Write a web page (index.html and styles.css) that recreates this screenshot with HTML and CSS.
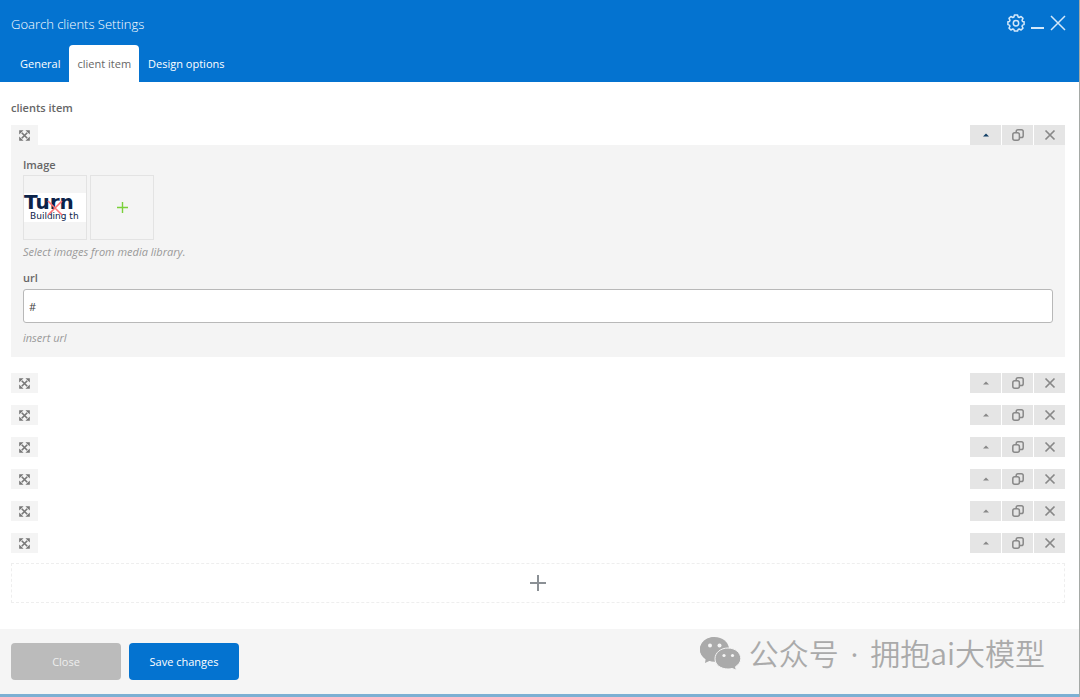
FILE: index.html
```html
<!DOCTYPE html>
<html lang="en">
<head>
<meta charset="utf-8">
<title>Goarch clients Settings</title>
<link rel="stylesheet" href="styles.css">
</head>
<body>
<svg class="sprite" aria-hidden="true">
  <symbol id="move" viewBox="0 0 12 12"><path d="M3 3l6 6M9 3L3 9" stroke="currentColor" stroke-width="1.8"/><path d="M.2.2h4.800L.2 5zM11.800.2V5L7 .2zM.2 11.800V7L5 11.800zM11.800 11.800H7L11.800 7z" fill="currentColor"/></symbol>
  <symbol id="up" viewBox="0 0 6 4"><path d="M0 3.500L3 .5l3 3z" fill="currentColor"/></symbol>
  <symbol id="copy" viewBox="0 0 12 12"><g fill="none" stroke="currentColor" stroke-width="1.500"><rect x=".8" y="3.800" width="6.600" height="7.400" rx="2"/><path d="M4.200 3.500V2.600Q4.200.8 6 .8h3.400q1.800 0 1.800 1.800v4.200q0 1.800-1.800 1.800H7.800"/></g></symbol>
  <symbol id="cross" viewBox="0 0 12 12"><path d="M1.500 1.500l9 9M10.500 1.500l-9 9" stroke="currentColor" stroke-width="1.700"/></symbol>
</svg>
<div class="window">
  <header class="header">
    <div class="titlebar">
      <h1 class="title">Goarch clients Settings</h1>
      <div class="window-controls">
        <button class="icon-button" aria-label="Settings"><svg width="18" height="18" viewBox="0 0 18 18" fill="none" stroke="currentColor" stroke-width="1.500" stroke-linejoin="round"><path d="M7.400 1h3.200l.5 2 1.100.5 1.900-1 1.900 1.900-1 1.900.5 1.100 1.600.4v2.800l-1.600.5-.5 1.100 1 1.900-1.900 1.900-1.900-1-1.100.5-.5 1.600H7.400l-.5-1.600-1.100-.5-1.900 1L2 14.100l1-1.900-.5-1.100-1.600-.5V7.800l1.600-.4L3 6.300 2 4.400l1.900-1.900 1.900 1L6.900 3z"/><circle cx="9" cy="9.200" r="2.700"/></svg></button>
        <button class="icon-button" aria-label="Minimize"><svg width="13" height="18" viewBox="0 0 13 18"><path d="M0 14h13" stroke="currentColor" stroke-width="2"/></svg></button>
        <button class="icon-button" aria-label="Close window"><svg width="16" height="18" viewBox="0 0 16 18"><path d="M1 2l14 14M15 2L1 16" stroke="currentColor" stroke-width="1.500"/></svg></button>
      </div>
    </div>
    <nav class="tabs">
      <button class="tab">General</button>
      <button class="tab tab-active">client item</button>
      <button class="tab">Design options</button>
    </nav>
  </header>
  <main class="content">
    <h2 class="label">clients item</h2>
    <div class="items">
      <section class="item item-open">
        <div class="bar">
          <button class="move" aria-label="Move"><svg><use href="#move"/></svg></button>
          <div class="actions"><button class="action action-current" aria-label="Toggle"><svg class="up"><use href="#up"/></svg></button><button class="action" aria-label="Duplicate"><svg><use href="#copy"/></svg></button><button class="action" aria-label="Delete"><svg><use href="#cross"/></svg></button></div>
        </div>
        <div class="panel">
          <h3 class="label">Image</h3>
          <div class="thumbs">
            <div class="thumb">
              <div class="logo"><span class="logo-name">Turn</span><span class="logo-line">Building th</span></div>
              <button class="remove" aria-label="Remove image"><svg width="16" height="16" viewBox="0 0 16 16"><path d="M1 1l14 14M15 1L1 15" stroke="currentColor" stroke-width="1.600"/></svg></button>
            </div>
            <button class="thumb add-image" aria-label="Add image"><svg width="11" height="11" viewBox="0 0 11 11"><path d="M0 5.500h11M5.500 0v11" stroke="currentColor" stroke-width="1.400"/></svg></button>
          </div>
          <p class="hint">Select images from media library.</p>
          <label class="label" for="url">url</label>
          <input class="field" id="url" type="text" value="#">
          <p class="hint">insert url</p>
        </div>
      </section>
      <section class="item bar">
        <button class="move" aria-label="Move"><svg><use href="#move"/></svg></button>
        <div class="actions"><button class="action" aria-label="Toggle"><svg class="up"><use href="#up"/></svg></button><button class="action" aria-label="Duplicate"><svg><use href="#copy"/></svg></button><button class="action" aria-label="Delete"><svg><use href="#cross"/></svg></button></div>
      </section>
      <section class="item bar">
        <button class="move" aria-label="Move"><svg><use href="#move"/></svg></button>
        <div class="actions"><button class="action" aria-label="Toggle"><svg class="up"><use href="#up"/></svg></button><button class="action" aria-label="Duplicate"><svg><use href="#copy"/></svg></button><button class="action" aria-label="Delete"><svg><use href="#cross"/></svg></button></div>
      </section>
      <section class="item bar">
        <button class="move" aria-label="Move"><svg><use href="#move"/></svg></button>
        <div class="actions"><button class="action" aria-label="Toggle"><svg class="up"><use href="#up"/></svg></button><button class="action" aria-label="Duplicate"><svg><use href="#copy"/></svg></button><button class="action" aria-label="Delete"><svg><use href="#cross"/></svg></button></div>
      </section>
      <section class="item bar">
        <button class="move" aria-label="Move"><svg><use href="#move"/></svg></button>
        <div class="actions"><button class="action" aria-label="Toggle"><svg class="up"><use href="#up"/></svg></button><button class="action" aria-label="Duplicate"><svg><use href="#copy"/></svg></button><button class="action" aria-label="Delete"><svg><use href="#cross"/></svg></button></div>
      </section>
      <section class="item bar">
        <button class="move" aria-label="Move"><svg><use href="#move"/></svg></button>
        <div class="actions"><button class="action" aria-label="Toggle"><svg class="up"><use href="#up"/></svg></button><button class="action" aria-label="Duplicate"><svg><use href="#copy"/></svg></button><button class="action" aria-label="Delete"><svg><use href="#cross"/></svg></button></div>
      </section>
      <section class="item bar">
        <button class="move" aria-label="Move"><svg><use href="#move"/></svg></button>
        <div class="actions"><button class="action" aria-label="Toggle"><svg class="up"><use href="#up"/></svg></button><button class="action" aria-label="Duplicate"><svg><use href="#copy"/></svg></button><button class="action" aria-label="Delete"><svg><use href="#cross"/></svg></button></div>
      </section>
    </div>
    <button class="add-item" aria-label="Add item"><svg width="16" height="16" viewBox="0 0 16 16"><path d="M0 8h16M8 0v16" stroke="currentColor" stroke-width="2"/></svg></button>
  </main>
  <footer class="footer">
    <button class="button button-close">Close</button>
    <button class="button button-save">Save changes</button>
    <div class="account" lang="zh-CN">
      <svg width="41" height="33" viewBox="0 0 41 33" aria-hidden="true"><path d="M15 0C6.500 0 0 5.500 0 12.500c0 4 2.200 7.400 5.600 9.700L5 26l4.800-2.300c1.700.5 3.400.8 5.500.8" fill="#aaa"/><ellipse cx="14.500" cy="12.300" rx="14.500" ry="12.300" fill="#aaa"/><path d="M28 11c-7.300 0-13 4.700-13 10.800S20.700 32 28 32c1.400 0 2.800-.2 4.100-.6l4.300 1.800-.9-3.500c3.200-2 5.300-4.800 5.300-7.900C40.800 15.700 35.300 11 28 11z" fill="#aaa" stroke="#f5f5f5"/><g fill="#f5f5f5"><circle cx="10" cy="8.500" r="2"/><circle cx="19.500" cy="8.500" r="2"/><circle cx="24" cy="18.500" r="1.600"/><circle cx="32.500" cy="18.500" r="1.600"/></g></svg>
      <span>公众号<span class="dot"> · </span>拥抱ai大模型</span>
    </div>
  </footer>
</div>
</body>
</html>
```
FILE: styles.css
```css
* { box-sizing: border-box; }
body {
  margin: 0;
  color: #555;
  background: #fff;
  font: 11px/16px "Open Sans", "Noto Sans", sans-serif;
}
button { margin: 0; padding: 0; border: 0; background: none; font: inherit; color: inherit; }
svg { display: block; }
h1, h2, h3, p { margin: 0; }
.sprite { position: absolute; width: 0; height: 0; }
.window {
  display: flex;
  flex-direction: column;
  min-height: 100vh;
  border-right: 1px solid #a5a9a6;
}
.header { background: #0473d0; color: #fff; }
.titlebar { display: flex; justify-content: space-between; height: 45px; padding: 14px 13px 0 11px; }
.title { font-size: 13px; font-weight: 300; line-height: 20px; }
.window-controls { display: flex; gap: 6px; color: #d3e8fa; }
.icon-button { height: 18px; }
.tabs { display: flex; gap: 1px; padding-left: 12px; }
.tab { height: 37px; padding: 0 8px; border-radius: 4px 4px 0 0; }
.tab-active { background: #fff; color: #666; }
.content { flex: 1; padding: 18px 14px 26px 11px; }
.label { display: block; font-size: 11px; font-weight: 600; line-height: 16px; color: #666; }
.items { display: flex; flex-direction: column; gap: 12px; margin-top: 9px; }
.item-open { margin-bottom: 4px; }
.bar { display: flex; justify-content: space-between; height: 20px; }
.move { display: grid; place-items: center; width: 27px; height: 20px; background: #f4f4f4; color: #777; }
.move svg { width: 11px; height: 11px; }
.actions { display: flex; gap: 1px; }
.action { display: grid; place-items: center; width: 31px; height: 20px; background: #e5e5e5; color: #888; }
.action svg { width: 12px; height: 12px; }
.action .up { width: 6px; height: 4px; }
.action-current { color: #123f66; }
.panel { padding: 12px 12px 11px; background: #f4f4f4; }
.thumbs { display: flex; gap: 3px; margin-top: 2px; }
.thumb { position: relative; display: flex; flex-direction: column; justify-content: center; width: 64px; height: 65px; border: 1px solid #e3e3e3; }
.logo { padding-bottom: 1px; background: #fff; color: #0c2349; font-family: "DejaVu Sans", sans-serif; white-space: nowrap; }
.logo-name { display: block; font-size: 20px; font-weight: 700; line-height: 19px; }
.logo-line { display: block; padding-left: 6px; font-size: 9px; line-height: 9px; }
.remove { position: absolute; inset: 0; display: grid; place-items: center; color: #ff7474; }
.add-image { align-items: center; color: #7ad03a; }
.hint { margin: 4px 0 10px; font-style: italic; color: #999; }
.field { display: block; width: 100%; height: 34px; margin-top: 3px; padding: 0 5px; border: 1px solid #b8b8b8; border-radius: 3px; background: #fff; color: #444; font: inherit; }
.field + .hint { margin: 7px 0 0; }
.add-item { display: grid; place-items: center; width: 100%; height: 40px; margin-top: 10px; border: 1px dashed #eee; color: #8b9095; }
.footer { display: flex; align-items: center; gap: 8px; height: 68px; padding: 0 34px 0 11px; border-bottom: 3px solid #7db0d3; background: #f5f5f5; }
.button { width: 110px; height: 37px; border-radius: 4px; color: #fff; }
.button-close { background: #bbb; color: #eee; }
.button-save { background: #0473d0; }
.account { display: flex; align-items: center; gap: 8px; margin: 0 0 18px auto; color: #aaa; font: 350 30px/36px "Noto Sans CJK SC", sans-serif; white-space: pre; }
.account svg { margin-top: 2px; }
.dot { padding: 0 4px; font-family: "Open Sans", sans-serif; font-weight: 400; }
```
